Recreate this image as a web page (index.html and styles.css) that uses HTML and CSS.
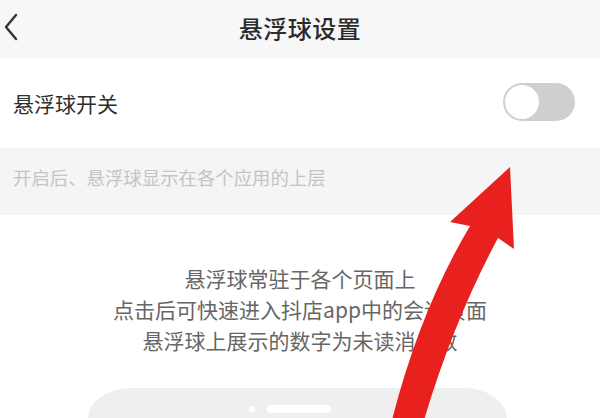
FILE: index.html
```html
<!DOCTYPE html>
<html lang="zh">
<head>
<meta charset="utf-8">
<link rel="stylesheet" href="styles.css">
</head>
<body>
<div class="page">
  <header class="topbar">
    <svg class="back" width="16" height="28" viewBox="0 0 16 28"><path d="M13 2 L3 14 L13 26" fill="none" stroke="#333" stroke-width="2.4" stroke-linecap="round" stroke-linejoin="round"/></svg>
    <h1 class="title">悬浮球设置</h1>
  </header>
  <div class="row">
    <span class="row-label">悬浮球开关</span>
    <div class="toggle"><div class="knob"></div></div>
  </div>
  <div class="hint">开启后、悬浮球显示在各个应用的上层</div>
  <div class="info">
    <p>悬浮球常驻于各个页面上</p>
    <p>点击后可快速进入抖店app中的会话页面</p>
    <p>悬浮球上展示的数字为未读消息数</p>
  </div>
  <div class="preview">
    <span class="dot"></span>
    <span class="bar"></span>
  </div>
  <svg class="arrow" width="600" height="418" viewBox="0 0 600 418">
    <path d="M392 420 Q420 310 470 226 L450 222 L510 167 L514 249 L498 238 Q454 320 424 420 Z" fill="#e8211f"/>
  </svg>
</div>
</body>
</html>
```
FILE: styles.css
```css
html, body {
  margin: 0;
  padding: 0;
  background: #ffffff;
}
body {
  font-family: "Noto Sans CJK SC", "Noto Sans", sans-serif;
  width: 600px;
  height: 418px;
  overflow: hidden;
}
.page {
  position: relative;
  width: 600px;
  height: 418px;
  overflow: hidden;
}
.topbar {
  height: 58px;
  background: #f7f7f7;
  display: flex;
  align-items: center;
  justify-content: center;
  position: relative;
  padding-bottom: 3px;
  box-sizing: border-box;
}
.back {
  position: absolute;
  left: 3px;
  top: 13px;
}
.title {
  margin: 0;
  font-size: 24px;
  font-weight: 500;
  color: #2b2b2b;
  letter-spacing: 0.5px;
}
.row {
  height: 90px;
  display: flex;
  align-items: center;
  justify-content: space-between;
  padding: 0 25px 0 13px;
  background: #ffffff;
  box-sizing: border-box;
}
.row-label {
  font-size: 21px;
  color: #2e2e2e;
}
.toggle {
  width: 72px;
  height: 38px;
  border-radius: 19px;
  background: #cfcfcf;
  display: flex;
  align-items: center;
  padding: 2px;
  box-sizing: border-box;
  margin-top: -2px;
}
.knob {
  width: 34px;
  height: 34px;
  border-radius: 50%;
  background: #ffffff;
}
.hint {
  height: 67px;
  background: #f5f5f5;
  display: flex;
  align-items: center;
  padding-left: 13px;
  font-size: 18.4px;
  color: #c4c4c4;
  padding-bottom: 10px;
  box-sizing: border-box;
}
.info {
  padding-top: 48px;
  text-align: center;
  color: #666666;
  font-size: 21px;
  line-height: 31px;
}
.info p {
  margin: 0;
}
.preview {
  margin: 32px 93px 0 88px;
  height: 60px;
  background: #efefef;
  border-radius: 44px 44px 0 0 / 30px 30px 0 0;
  display: flex;
  justify-content: center;
  align-items: flex-start;
  gap: 12px;
  padding-top: 17px;
  box-sizing: border-box;
}
.dot {
  width: 6px;
  height: 6px;
  border-radius: 50%;
  background: #ffffff;
  margin-top: 1px;
  margin-left: -16px;
}
.bar {
  width: 64px;
  height: 8px;
  border-radius: 4px;
  background: #ffffff;
}
.arrow {
  position: absolute;
  left: 0;
  top: 0;
}
```
